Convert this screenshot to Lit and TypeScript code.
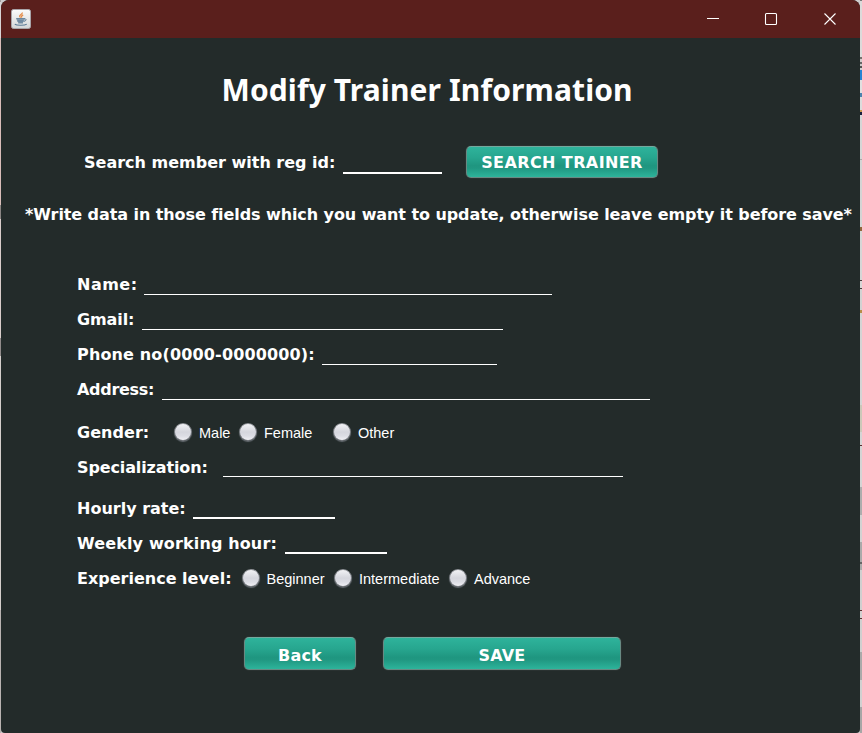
import { LitElement, html, css, svg } from "lit";
import { customElement } from "lit/decorators.js";
import { styleMap } from "lit/directives/style-map.js";

interface Option { text: string; width: number; }
interface Row {
  label: string;
  spacing: number;
  labelWidth: number;
  gap: number;
  field?: number;
  thick?: boolean;
  options?: Option[];
}

const rows: Row[] = [
  { label: "Name:", spacing: 0.5, labelWidth: 67, gap: 11, field: 408 },
  { label: "Gmail:", spacing: -0.1, labelWidth: 65, gap: 11, field: 361 },
  { label: "Phone no(0000-0000000):", spacing: 0.15, labelWidth: 245, gap: 11, field: 175 },
  { label: "Address:", spacing: -0.3, labelWidth: 85, gap: 19, field: 488 },
  { label: "Gender:", spacing: 0.04, labelWidth: 97, gap: 11, options: [{ text: "Male", width: 65 }, { text: "Female", width: 94 }, { text: "Other", width: 70 }] },
  { label: "Specialization:", spacing: -0.12, labelWidth: 146, gap: 17, field: 400 },
  { label: "Hourly rate:", spacing: 0, labelWidth: 116, gap: 11, field: 142, thick: true },
  { label: "Weekly working hour:", spacing: 0.14, labelWidth: 208, gap: 11, field: 102, thick: true },
  { label: "Experience level:", spacing: 0, labelWidth: 164.5, gap: 0, options: [{ text: "Beginner", width: 92.5 }, { text: "Intermediate", width: 115 }, { text: "Advance", width: 90 }] },
];

@customElement("app-root")
export class AppRoot extends LitElement {
  static styles = css`
    :host {
      display: grid;
      grid-template-columns: 1px 859px 2px;
      height: 733px;
      overflow: hidden;
      background: #cfcccd;
      color: #fff;
      font-family: "DejaVu Sans", sans-serif;
    }
    .left-edge {
      background: linear-gradient(#a09c9d 2px, #d8d4d5 2px 38px, #d9bdb9 38px 205px, #8a8583 205px 219px, #d9cdca 219px 338px, #918b8a 338px 356px, #d5cfcc 356px 610px, #b9b3b1 610px);
    }
    .right-edge {
      background: linear-gradient(#777 1px, #dcdada 1px 57px, #77736f 57px 59px, #d0cccc 59px 62px, #666 62px 64px, #c8c8c8 64px 66px, #555 66px 68px, #d0d0d0 68px 70px, #2684d3 70px 80px, #e0e0e0 80px 93px, #4b83ae 93px 97px, #dcdcdc 97px 110px, #c79a52 110px 112px, #17203d 112px 115px, #d6d6d6 115px 159px, #aaa 159px 160px, #d4d4d4 160px 227px, #90673c 227px 231px, #d6d6d6 231px 280px, #493b3b 280px 281px, #d6d6d6 281px 288px, #493b3b 288px 289px, #d2d2d2 289px 310px, #b58d48 310px 313px, #d4d4d4 313px 405px, #cbc8b9 405px 432px, #d4d4d4 432px 445px, #5a3030 445px 446px, #d4d4d4 446px 487px, #adadad 487px 515px, #d2d2d2 515px 542px, #aaa 542px 562px, #666 562px 564px, #aaa 564px 570px, #cfcfcf 570px 610px, #5a3030 610px 611px, #d0d0d0 611px 618px, #5a3030 618px 619px, #cfcfcf 619px 652px, #aaa 652px 680px, #d0d0d0 680px 707px, #a6a6a6 707px);
    }
    .window {
      display: flex;
      flex-direction: column;
      overflow: hidden;
      background: #232b2a;
      border-radius: 8px 8px 4px 4px;
    }
    .titlebar {
      display: flex;
      align-items: center;
      height: 38px;
      padding: 0 23px 0 10px;
      box-sizing: border-box;
      background: #5a1f1c;
    }
    .titlebar .java { margin-right: auto; margin-bottom: 1px; }
    .controls { display: flex; gap: 45px; }
    .controls .minimize { margin-right: -1px; }
    svg { display: block; }
    .content { display: flex; flex-direction: column; }
    h1 {
      margin: 32px 0 0 220.5px;
      font-family: "Noto Sans", sans-serif;
      font-size: 30px;
      line-height: 40px;
      letter-spacing: 0.12px;
      white-space: nowrap;
    }
    .search {
      display: flex;
      align-items: center;
      height: 32px;
      margin: 36px 0 0 83px;
    }
    .search .label { width: 259px; padding-top: 2px; }
    .search .field { width: 99px; margin-right: 24px; margin-bottom: 4px; }
    .label, .hint {
      flex: none;
      font-size: 16px;
      font-weight: bold;
      line-height: 24px;
      white-space: nowrap;
    }
    .hint { margin: 25px 0 45px 24px; letter-spacing: -0.08px; }
    .row {
      display: flex;
      height: 24px;
      padding-left: 76px;
    }
    .row .label { padding-top: 1px; }
    .field {
      align-self: flex-end;
      height: 20px;
      box-sizing: border-box;
      border-bottom: 1px solid #fff;
      margin-bottom: 1px;
    }
    .field.thick { border-bottom-width: 2px; }
    .spec { margin-bottom: 2px; }
    .option {
      display: flex;
      align-items: center;
      gap: 7px;
      font: 14.5px/24px "Liberation Sans", sans-serif;
      white-space: nowrap;
      padding-top: 1px;
      height: 24px;
      box-sizing: border-box;
    }
    .dot {
      flex: none;
      width: 18px;
      height: 18px;
      margin-top: -2px;
      box-sizing: border-box;
      border-radius: 50%;
      border: 1px solid #7b7f84;
      border-top-color: #92959a;
      background: linear-gradient(#f2f2f5, #d5d6dd 50%, #dcdde4 75%, #f0f0f4);
      box-shadow: 0 1px 1px #646b70;
    }
    button {
      font: bold 16px/24px "DejaVu Sans", sans-serif;
      color: #fff;
      height: 32px;
      padding: 2px 0 0;
      box-sizing: border-box;
      border: 1px solid #688a83;
      border-top-color: #74a99e;
      border-radius: 5px;
      background: linear-gradient(#2eb39b, #27a68f 35%, #1f9680 62%, #209781 70%, #2db49b);
      box-shadow: 0 0 1px #65736f;
      letter-spacing: 0.2px;
      white-space: nowrap;
    }
    .find { width: 192px; letter-spacing: 0.4px; }
    .actions { display: flex; gap: 27px; margin: 47px 0 0 243px; }
    .actions button { height: 33px; padding-top: 4px; }
    .back { width: 112px; }
    .save { width: 238px; }
  `;

  private javaIcon() {
    return svg`<svg class="java" width="20" height="20" viewBox="0 0 20 20">
      <defs><linearGradient id="tile" x1="0" y1="0" x2="0" y2="1"><stop offset="0" stop-color="#fbfbfb"/><stop offset="1" stop-color="#d3d6d8"/></linearGradient></defs>
      <rect x=".5" y=".5" width="19" height="19" rx="2" fill="url(#tile)" stroke="#a8a4a8"/>
      <path d="M11.300 3.500C11.800 5.200 8.200 5.800 8.700 7.400c.2.600.8.800.9 1.300M12.200 5.900c-1.500.8-2.200 1.300-1.200 2.600" fill="none" stroke="#e58a45" stroke-width="1.300"/>
      <path d="M5.500 9.700h8.200c-.2 2-1 3.300-2.200 4H7.700c-1.300-.7-2-2-2.200-4z" fill="#8aa0b4"/>
      <path d="M5.200 9.700h8.700M6.500 12h6M7.200 13.900h4.800M13.500 9.800c2.200-.2 2 2.100-.4 2.500" fill="none" stroke="#56758f" stroke-width="1"/>
      <path d="M3.800 15.300c2 1.300 10 1.300 12-.2" fill="none" stroke="#5c7b96" stroke-width="1.100"/>
    </svg>`;
  }

  private renderRow(r: Row) {
    return html`<div class="row" style=${styleMap({ marginBottom: `${r.gap}px` })}>
      <span class="label" style=${styleMap({ width: `${r.labelWidth}px`, letterSpacing: `${r.spacing}px` })}>${r.label}</span>
      ${r.field ? html`<span class="field ${r.thick ? "thick" : ""} ${r.label === "Specialization:" ? "spec" : ""}" style=${styleMap({ width: `${r.field}px` })}></span>` : ""}
      ${r.options?.map(o => html`<span class="option" style=${styleMap({ width: `${o.width}px` })}><i class="dot"></i>${o.text}</span>`)}
    </div>`;
  }

  render() {
    return html`
      <div class="left-edge"></div>
      <div class="window">
        <div class="titlebar">
          ${this.javaIcon()}
          <div class="controls">
            <svg class="minimize" width="14" height="14" viewBox="0 0 14 14"><path d="M1 6.500h12" stroke="#fff" fill="none"/></svg>
            <svg width="14" height="14" viewBox="0 0 14 14"><rect x="1.500" y="1.500" width="11" height="11" rx="1" stroke="#fff" stroke-width="1.100" fill="none"/></svg>
            <svg width="14" height="14" viewBox="0 0 14 14"><path d="M1.500 1.500l11 11M12.500 1.500l-11 11" stroke="#fff" stroke-width="1.100" fill="none"/></svg>
          </div>
        </div>
        <div class="content">
          <h1>Modify Trainer Information</h1>
          <div class="search">
            <span class="label">Search member with reg id:</span>
            <span class="field thick"></span>
            <button class="find">SEARCH TRAINER</button>
          </div>
          <div class="hint">*Write data in those fields which you want to update, otherwise leave empty it before save*</div>
          ${rows.map(r => this.renderRow(r))}
          <div class="actions">
            <button class="back">Back</button>
            <button class="save">SAVE</button>
          </div>
        </div>
      </div>
      <div class="right-edge"></div>
    `;
  }
}
